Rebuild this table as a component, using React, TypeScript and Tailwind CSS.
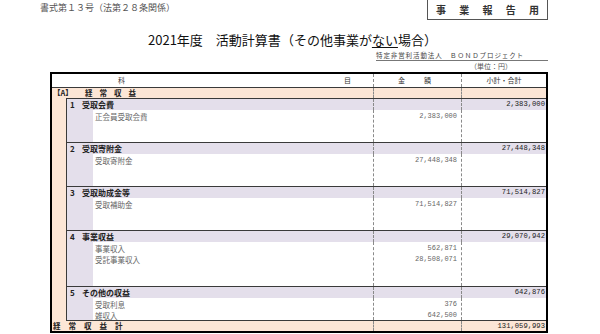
import React from "react";

type Sec = {
  no: string;
  title: string;
  sub: string;
  items: { name: string; amount: string }[];
  bodyH: string;
};

const sections: Sec[] = [
  { no: "1", title: "受取会費", sub: "2,383,000", items: [{ name: "正会員受取会費", amount: "2,383,000" }], bodyH: "h-[32px]" },
  { no: "2", title: "受取寄附金", sub: "27,448,348", items: [{ name: "受取寄附金", amount: "27,448,348" }], bodyH: "h-[32px]" },
  { no: "3", title: "受取助成金等", sub: "71,514,827", items: [{ name: "受取補助金", amount: "71,514,827" }], bodyH: "h-[32px]" },
  {
    no: "4",
    title: "事業収益",
    sub: "29,070,942",
    items: [
      { name: "事業収入", amount: "562,871" },
      { name: "受託事業収入", amount: "28,508,071" },
    ],
    bodyH: "h-[44px]",
  },
  {
    no: "5",
    title: "その他の収益",
    sub: "642,876",
    items: [
      { name: "受取利息", amount: "376" },
      { name: "雑収入", amount: "642,500" },
    ],
    bodyH: "h-[22px]",
  },
];

const mono = "font-['Liberation_Mono','DejaVu_Sans_Mono',monospace]";

function Section({ s }: { s: Sec }) {
  return (
    <div className="border-b border-[#3a3a3a]">
      <div className="flex h-[11px] bg-[#e4dfeb]">
        <div className="flex flex-1 items-center text-[8px] font-bold leading-[11px] text-[#222]">
          <span className="w-[15px] pl-[3px]">{s.no}</span>
          <span>{s.title}</span>
        </div>
        <div className="w-[88px] border-l border-dashed border-[#8a8a8a]" />
        <div className={`w-[85px] border-l border-dashed border-[#8a8a8a] pr-[1px] text-right text-[7.2px] leading-[11px] text-[#222] ${mono}`}>
          {s.sub}
        </div>
      </div>
      <div className={`flex ${s.bodyH}`}>
        <div className="flex flex-1">
          <div className="w-[26px] bg-[#e4dfeb]" />
          <div className="flex flex-col pl-[2px] pt-[1px]">
            {s.items.map((it) => (
              <div key={it.name} className="h-[11px] text-[7.5px] leading-[11px] text-[#666]">
                {it.name}
              </div>
            ))}
          </div>
        </div>
        <div className="flex w-[88px] flex-col border-l border-dashed border-[#8a8a8a] pr-[4px] pt-[1px]">
          {s.items.map((it) => (
            <div key={it.name} className={`h-[11px] text-right text-[7px] leading-[11px] text-[#666] ${mono}`}>
              {it.amount}
            </div>
          ))}
        </div>
        <div className="w-[85px] border-l border-dashed border-[#8a8a8a]" />
      </div>
    </div>
  );
}

export default function App() {
  return (
    <div className="h-[334px] w-[600px] overflow-hidden bg-white font-['Noto_Sans_CJK_JP','Noto_Sans',sans-serif] text-[#222]">
      {/* top row */}
      <div className="flex h-[20px]">
        <div className="pl-[40px] pt-[2px] text-[9px] leading-[12px] text-[#555]">書式第１３号（法第２８条関係）</div>
        <div className="ml-auto mr-[52px] flex h-[20px] w-[121px] items-center justify-between border border-t-0 border-[#555] px-[8px] text-[10px] font-bold leading-[12px] text-[#333]">
          <span>事</span>
          <span>業</span>
          <span>報</span>
          <span>告</span>
          <span>用</span>
        </div>
      </div>
      {/* title */}
      <div className="mt-[12px] h-[16px] pl-[148px] text-[13px] leading-[16px] text-[#111]">
        2021年度　活動計算書<span className="font-['Liberation_Serif','Noto_Sans_CJK_JP',serif]">（その他事業が<span className="underline underline-offset-2">ない</span>場合）</span>
      </div>
      {/* org */}
      <div className="ml-[376px] mr-[52px] h-[13px] border-b border-[#777] pt-[2px] text-[6.5px] leading-[10px] tracking-[0.9px] text-[#444]">
        特定非営利活動法人　ＢＯＮＤプロジェクト
      </div>
      <div className="h-[11px] pl-[470px] text-[7px] leading-[11px] text-[#555]">（単位：円）</div>
      {/* table */}
      <div className="ml-[50px] w-[498px] border-2 border-black">
        <div className="flex h-[14px] border-b border-[#3a3a3a] text-[7px] leading-[13px] text-[#333]">
          <div className="flex flex-1 justify-between pl-[66px] pr-[22px]">
            <span>科</span>
            <span>目</span>
          </div>
          <div className="w-[88px] border-l border-dashed border-[#8a8a8a] text-center tracking-[6px]">金　額</div>
          <div className="w-[85px] border-l border-dashed border-[#8a8a8a] text-center">小計・合計</div>
        </div>
        <div className="flex h-[10px] bg-[#fce6d6] text-[7.5px] font-bold leading-[10px] text-[#222]">
          <div className="flex flex-1">
            <span className="w-[33px] pl-[1px]">【A】</span>
            <span className="tracking-[7px]">経常収益</span>
          </div>
          <div className="w-[88px] border-l border-dashed border-[#8a8a8a]" />
          <div className="w-[85px] border-l border-dashed border-[#8a8a8a]" />
        </div>
        <div className="flex bg-[#fce6d6]">
          <div className="w-[14px]" />
          <div className="flex-1 border-l border-t border-[#3a3a3a] bg-white">
            {sections.map((s) => (
              <Section key={s.no} s={s} />
            ))}
          </div>
        </div>
        <div className="flex h-[10px] bg-[#fce6d6] text-[7.5px] font-bold leading-[10px] text-[#222]">
          <div className="flex-1 pl-[1px] tracking-[8px]">経常収益計</div>
          <div className="w-[88px] border-l border-dashed border-[#8a8a8a]" />
          <div className={`w-[85px] border-l border-dashed border-[#8a8a8a] pr-[1px] text-right text-[7.2px] font-normal tracking-normal ${mono}`}>
            131,059,993
          </div>
        </div>
      </div>
    </div>
  );
}
